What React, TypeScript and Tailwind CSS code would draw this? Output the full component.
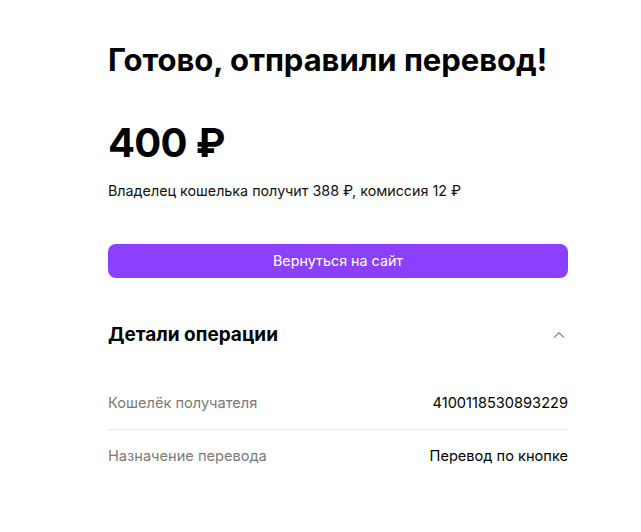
import { ChevronUp } from 'lucide-react';

const rows = [
  { label: 'Кошелёк получателя', value: '4100118530893229' },
  { label: 'Назначение перевода', value: 'Перевод по кнопке' },
];

export default function App() {
  return (
    <div className="min-h-[532px] w-full bg-white font-['Inter',sans-serif] text-black">
      <div className="ml-[108px] w-[460px] pt-[40px]">
        <h1 className="text-[31px] font-bold leading-[40px] tracking-[-0.05px]">
          Готово, отправили перевод!
        </h1>

        <div className="mt-[38px] text-[40px] font-bold leading-[50px] tracking-[-0.7px]">400 ₽</div>

        <p className="mt-[13px] text-[14.3px] leading-[20px] text-[#111]">
          Владелец кошелька получит 388 ₽, комиссия 12 ₽
        </p>

        <button
          type="button"
          className="mt-[43px] flex h-[34px] w-full items-center justify-center rounded-[8px] bg-[#8c3ffd] text-[14.3px] text-white"
        >
          Вернуться на сайт
        </button>

        <div className="mt-[43px] flex items-center justify-between">
          <h2 className="text-[19px] font-bold leading-[28px]">Детали операции</h2>
          <ChevronUp className="h-[18px] w-[18px] text-[#888]" strokeWidth={1.5} />
        </div>

        <div className="mt-[28px]">
          {rows.map((row, i) => (
            <div
              key={row.label}
              className={`flex items-center justify-between py-[16px] text-[14.6px] leading-[20px] ${
                i < rows.length - 1 ? 'border-b border-[#eaeaea]' : ''
              }`}
            >
              <span className="text-[#7a7a7a]">{row.label}</span>
              <span className="text-black">{row.value}</span>
            </div>
          ))}
        </div>
      </div>
    </div>
  );
}
